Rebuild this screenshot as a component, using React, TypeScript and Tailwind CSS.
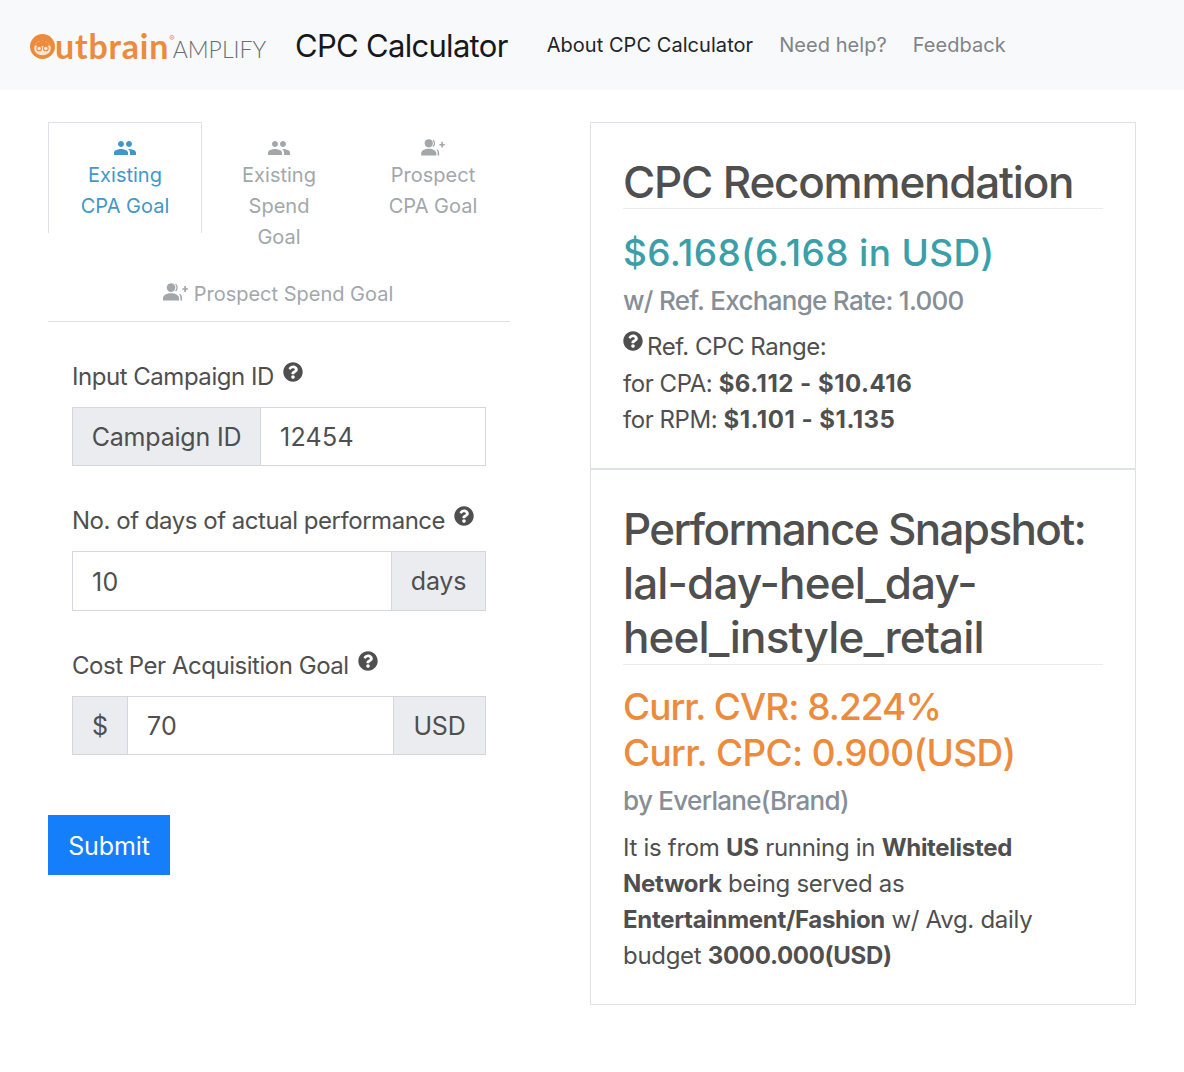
import React from "react"
import { FaQuestionCircle } from "react-icons/fa"
import { MdPeople } from "react-icons/md"

// person, sound arcs and a small plus, as on the prospect tabs
const ProspectIcon = ({ className }: { className: string }) => (
	<svg viewBox="0 0 25 18" className={className} fill="currentColor">
		<circle cx="8" cy="4.6" r="4.3" />
		<path d="M0 17.5v-2.4c0-3 4-4.8 8-4.8s8 1.800 8 4.800v2.400z" />
		<path d="M13 .8a5 5 0 0 1 0 7.600l-.9-1a3.600 3.600 0 0 0 0-5.600z" />
		<path d="M17.200 11c1 .8 1.800 2 1.800 3.500v3h-1.600v-3c0-1.400-.6-2.600-1.500-3.500z" />
		<path d="M21.300 3h1.700v2.200H25v1.600h-2V9h-1.700V6.800h-2V5.200h2z" />
	</svg>
)

const Logo = () => (
	<div className="flex items-end w-[238px] shrink-0 pt-[2px]">
		<svg viewBox="0 0 26 26" className="w-[25px] h-[25px] shrink-0 mb-[3px]">
			<circle cx="13" cy="13" r="13" fill="#ec8b3c" />
			<path d="M4.500 15c0-5 3.500-8 8.500-8s8.500 3 8.500 8c0 4-3.500 7-8.500 7s-8.500-3-8.500-7z" fill="#fbe6d3" />
			<path d="M5 12c2-4 5-5 8-5s6 1 8 5c-5 1-11 1-16 0z" fill="#ec8b3c" />
			<circle cx="9.500" cy="15" r="2.400" fill="none" stroke="#ec8b3c" strokeWidth="1.100" />
			<circle cx="16.500" cy="15" r="2.400" fill="none" stroke="#ec8b3c" strokeWidth="1.100" />
		</svg>
		<span className="font-['Lato',sans-serif] text-[34px] leading-[32px] text-[#ec8b3c] tracking-[0.8px] font-bold">utbrain</span>
		<span className="text-[8px] leading-[8px] text-[#ec8b3c] self-start mt-1">®</span>
		<span className="font-['Lato',sans-serif] text-[23px] leading-[26px] text-[#6b6e72] font-light -ml-[2px]">AMPLIFY</span>
	</div>
)

const tabs = [
	{ lines: ["Existing", "CPA Goal"], active: true, prospect: false },
	{ lines: ["Existing", "Spend", "Goal"], active: false, prospect: false },
	{ lines: ["Prospect", "CPA Goal"], active: false, prospect: true },
]

const TabBar = () => (
	<div className="border-b border-[#dee2e6] h-[200px]">
		<div className="flex items-start h-[157px]">
			{tabs.map((tab) => (
				<div
					key={tab.lines.join()}
					className={`w-[154px] pt-[13px] flex flex-col items-center text-[20px] leading-[31px] ${
						tab.active
							? "h-[111px] border border-b-0 border-[#dee2e6] text-[#4297c9]"
							: "border border-transparent text-[#a2a7ac]"
					}`}
				>
					{tab.prospect ? (
						<ProspectIcon className="w-[24px] h-[17px] mt-[3px] mb-[4px]" />
					) : (
						<MdPeople className="w-[24px] h-[24px]" />
					)}
					{tab.lines.map((l) => (
						<span key={l}>{l}</span>
					))}
				</div>
			))}
		</div>
		<div className="flex items-center justify-center gap-[6px] text-[20px] leading-[31px] text-[#a2a7ac] pr-[2px]">
			<ProspectIcon className="w-[25px] h-[18px] mb-[6px]" />
			<span>Prospect Spend Goal</span>
		</div>
	</div>
)

const Label = ({ children }: { children: React.ReactNode }) => (
	<div className="flex items-start text-[24px] leading-[36px] text-[#4f4f4f] h-[36px] whitespace-nowrap tracking-[-0.47px] pt-px">
		<span>{children}</span>
		<FaQuestionCircle className="w-[20px] h-[20px] ml-[9px] mt-[3px] text-[#4f4f4f]" />
	</div>
)

const Addon = ({ children, className }: { children: React.ReactNode; className: string }) => (
	<div className={`h-full flex items-center justify-center pt-[2px] bg-[#eaecf0] border border-[#d3d6dc] ${className}`}>{children}</div>
)

const Value = ({ children }: { children: React.ReactNode }) => (
	<div className="flex-1 h-full flex items-center px-[19px] pt-[2px] tracking-[0.3px] border-y border-[#d3d6dc]">{children}</div>
)

const InputRow = ({ children }: { children: React.ReactNode }) => (
	<div className="flex h-[59.4px] w-[414px] items-center text-[25px] tracking-[-0.2px] text-[#4f4f4f]">{children}</div>
)

const App = () => {
	return (
		<div className="w-[1184px] h-[1072px] bg-white font-['Inter',sans-serif] text-[#4f4f4f]">
			<nav className="h-[90px] bg-[#f8f9fa] flex items-center pl-[30px]">
				<Logo />
				<h1 className="ml-[27px] text-[31px] leading-[40px] text-[#16181b] tracking-[-0.7px] pt-[1px]">CPC Calculator</h1>
				<div className="flex items-center gap-[26px] ml-[39px] text-[20px] leading-[30px] tracking-[0.05px]">
					<span className="text-[#212529]">About CPC Calculator</span>
					<span className="text-[#7f8489]">Need help?</span>
					<span className="text-[#7f8489]">Feedback</span>
				</div>
			</nav>
			<main className="flex items-start px-[48px] pt-[32px]">
				<section className="w-[462px] shrink-0">
					<TabBar />
					<form className="px-[24px] pt-[36px]">
						<Label>Input Campaign ID</Label>
						<div className="mt-[13px]">
							<InputRow>
								<Addon className="w-[188px] border-r-0">Campaign ID</Addon>
								<div className="flex-1 h-full flex items-center pl-[19px] pt-[2px] tracking-[0.3px] border border-[#d3d6dc]">12454</div>
							</InputRow>
						</div>
						<div className="mt-[36px]">
							<Label>No. of days of actual performance</Label>
						</div>
						<div className="mt-[13px]">
							<InputRow>
								<div className="flex-1 h-full flex items-center px-[19px] pt-[3px] tracking-[0.3px] border border-r-0 border-[#d3d6dc]">10</div>
								<Addon className="w-[95px]">days</Addon>
							</InputRow>
						</div>
						<div className="mt-[36px]">
							<Label>Cost Per Acquisition Goal</Label>
						</div>
						<div className="mt-[13px]">
							<InputRow>
								<Addon className="w-[56px]">$</Addon>
								<Value>70</Value>
								<Addon className="w-[93px]">USD</Addon>
							</InputRow>
						</div>
					</form>
					<button className="mt-[60px] w-[122px] h-[60px] pt-[3px] bg-[#147efb] text-white text-[25px] tracking-[-0.1px]">Submit</button>
				</section>
				<section className="ml-[80px] w-[546px] border border-[#dee2e6]">
					<div className="h-[347px] px-[32px] pt-[33px] border-b-2 border-[#dee2e6]">
						<h2 className="text-[44px] leading-[53px] font-medium tracking-[-1.2px] border-b border-[#ececec] h-[53px]">CPC Recommendation</h2>
						<div className="text-[37px] leading-[44px] font-medium tracking-[0.35px] text-[#3a9fa9] mt-[22px]">$6.168(6.168 in USD)</div>
						<div className="text-[26px] leading-[32px] font-medium tracking-[-0.7px] text-[#868e96] mt-[10px]">w/ Ref. Exchange Rate: 1.000</div>
						<div className="text-[24px] leading-[36px] mt-[12px] tracking-[-0.45px]">
							<div className="flex items-start h-[37px]">
								<FaQuestionCircle className="w-[20px] h-[20px] mt-[2px] mr-[4px]" />
								<span>Ref. CPC Range:</span>
							</div>
							<div>for CPA: <b className="font-bold tracking-[0.5px]">$6.112 - $10.416</b></div>
							<div>for RPM: <b className="font-bold tracking-[0.5px]">$1.101 - $1.135</b></div>
						</div>
					</div>
					<div className="h-[534px] px-[32px] pt-[32px]">
						<h2 className="text-[44px] leading-[54px] font-medium tracking-[-0.85px] border-b border-[#ececec]">
							<span className="tracking-[-1.65px]">Performance Snapshot:</span> lal-day-heel_day-heel_instyle_retail
						</h2>
						<div className="text-[37px] leading-[46px] font-medium text-[#ec8b3c] mt-[19px]">
							<div className="tracking-[-1px]">Curr. CVR: 8.224%</div>
							<div className="tracking-[-0.65px]">Curr. CPC: 0.900(USD)</div>
						</div>
						<div className="text-[26px] leading-[32px] font-medium tracking-[-0.7px] text-[#868e96] mt-[9px]">by Everlane(Brand)</div>
						<p className="text-[24px] leading-[36px] mt-[13px] tracking-[-0.3px]">
							It is from <b className="font-bold">US</b> running in <b className="font-bold">Whitelisted Network</b> being served as <b className="font-bold">Entertainment/Fashion</b> w/ Avg. daily budget <b className="font-bold">3000.000(USD)</b>
						</p>
					</div>
				</section>
			</main>
		</div>
	)
}

export default App
